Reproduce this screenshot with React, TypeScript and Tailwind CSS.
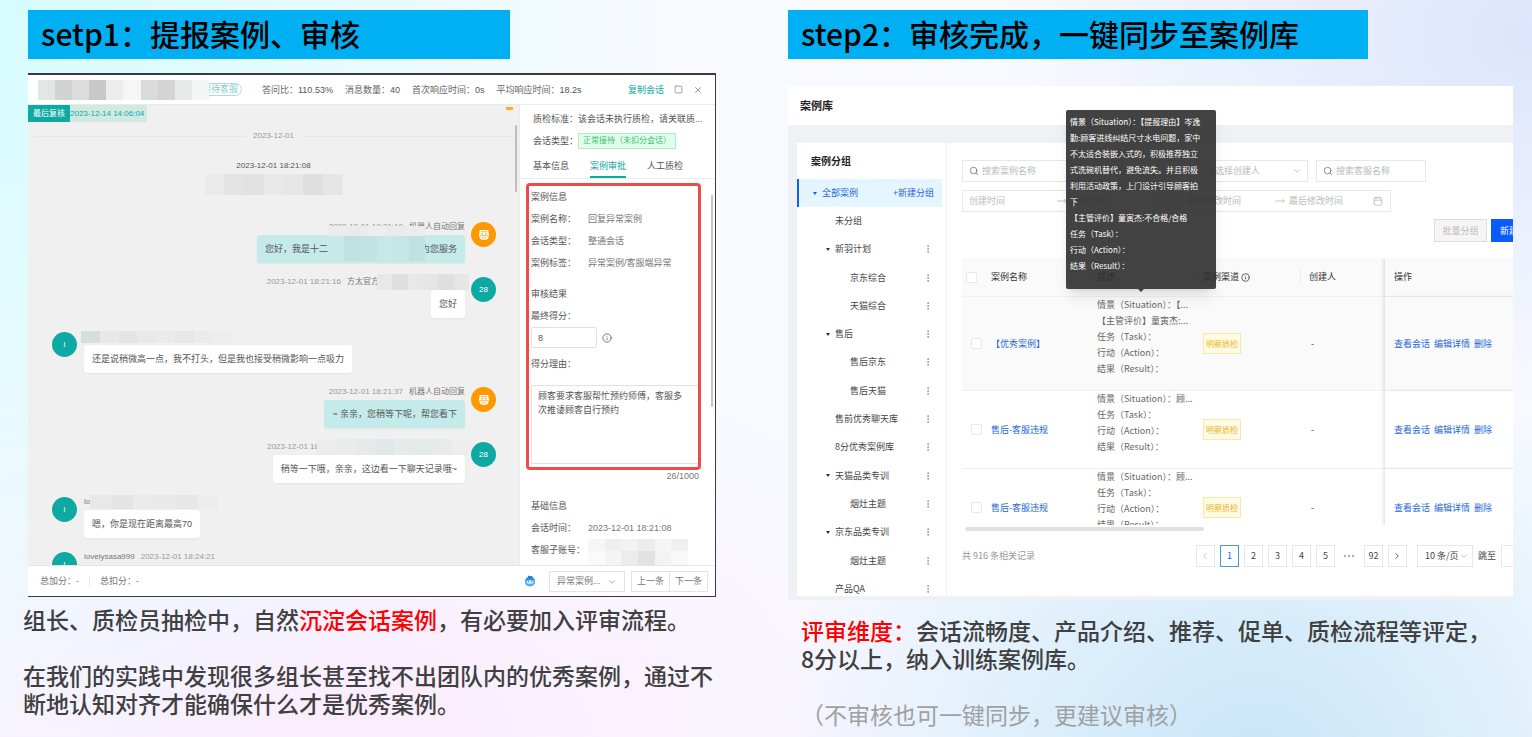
import { Search, ChevronDown, ChevronLeft, ChevronRight, Calendar, Info, Square, X, MoveRight, Ellipsis, EllipsisVertical } from "lucide-react";
import clsx from "clsx";

const tree = [
    { name: "未分组", level: 0, open: false, menu: false },
    { name: "新羽计划", level: 0, open: true, menu: true },
    { name: "京东综合", level: 1, open: false, menu: true },
    { name: "天猫综合", level: 1, open: false, menu: true },
    { name: "售后", level: 0, open: true, menu: true },
    { name: "售后京东", level: 1, open: false, menu: true },
    { name: "售后天猫", level: 1, open: false, menu: true },
    { name: "售前优秀聊天库", level: 0, open: false, menu: true },
    { name: "8分优秀案例库", level: 0, open: false, menu: true },
    { name: "天猫品类专训", level: 0, open: true, menu: true },
    { name: "烟灶主题", level: 1, open: false, menu: true },
    { name: "京东品类专训", level: 0, open: true, menu: true },
    { name: "烟灶主题", level: 1, open: false, menu: true },
    { name: "产品QA", level: 0, open: false, menu: true },
];

const cases = [
    { name: "【优秀案例】", lines: ["情景（Situation）：【...", "【主管评价】童寅杰:...", "任务（Task）：", "行动（Action）：", "结果（Result）："] },
    { name: "售后-客服违规", lines: ["情景（Situation）：顾...", "任务（Task）：", "行动（Action）：", "结果（Result）："] },
    { name: "售后-客服违规", lines: ["情景（Situation）：顾...", "任务（Task）：", "行动（Action）：", "结果（Result）："] },
];

const tip = [
    "情景（Situation）：【提报理由】岑逸",
    "勤:顾客进线纠结尺寸水电问题，家中",
    "不太适合装嵌入式的，积极推荐独立",
    "式洗碗机替代，避免流失。并且积极",
    "利用活动政策，上门设计引导顾客拍",
    "下",
    "【主管评价】童寅杰:不合格/合格",
    "任务（Task）：",
    "行动（Action）：",
    "结果（Result）：",
];

function Mosaic({ cells, className }: { cells: string[]; className: string }) {
    return (
        <div className={clsx("flex", className)} aria-hidden="true">
            {cells.map((c, i) => (
                <span key={i} className={clsx("flex-1", c)} />
            ))}
        </div>
    );
}

function Robot() {
    return (
        <svg viewBox="0 0 24 24" className="size-3">
            <path d="M5 2h14a2 2 0 0 1 2 2v5h1v5h-1v2c0 4-4 6-9 6s-9-2-9-6v-2H2V9h1V4a2 2 0 0 1 2-2z" fill="#fff" />
            <path d="M3 13.500h18M8 18h8M6 5.500h12" stroke="#ff9800" strokeWidth="1.500" />
            <circle cx="8.500" cy="9.500" r="1.700" fill="#ff9800" />
            <circle cx="15.500" cy="9.500" r="1.700" fill="#ff9800" />
        </svg>
    );
}

function Mascot() {
    return (
        <svg viewBox="0 0 24 24" className="size-3">
            <circle cx="12" cy="13" r="10" fill="#2b8fe0" />
            <path d="M8 1l5 2 5-1-3 4H9z" fill="#1c6fc4" />
            <path d="M2.500 10c5 2 14 2 19 0l.5 4c-1 6-5 8-10 8S3 20 2 14z" fill="#4fb2f0" />
            <ellipse cx="12" cy="14" rx="7" ry="3.500" fill="#d4f1ff" />
            <circle cx="9" cy="13.500" r="1" fill="#1a4f92" />
            <circle cx="15" cy="13.500" r="1" fill="#1a4f92" />
        </svg>
    );
}

type MessageProps = {
    side: "left" | "right";
    avatar: React.ReactNode;
    orange?: boolean;
    meta: React.ReactNode;
    bubble?: string;
    children?: React.ReactNode;
};

function Message({ side, avatar, orange, meta, bubble, children }: MessageProps) {
    const right = side === "right";
    return (
        <li className={clsx("flex h-[41px]", right ? "flex-row-reverse gap-1.5" : "gap-[7px]")}>
            <div className={clsx("flex size-[25px] shrink-0 items-center justify-center rounded-full text-[8px] text-white", orange ? "bg-[#ff9800]" : "bg-[#0fa9a3]")}>
                {avatar}
            </div>
            <div className={clsx("relative flex flex-col gap-1", right ? "items-end" : "items-start")}>
                <div className="flex h-[9px] items-center gap-1.5 whitespace-nowrap text-[8px] leading-[9px] text-[#999]">{meta}</div>
                {children && (
                    <div className={clsx("flex h-7 items-center whitespace-nowrap rounded-[3px] px-2 shadow-xs", bubble || "bg-white")}>{children}</div>
                )}
            </div>
        </li>
    );
}

function ChatWindow() {
    return (
        <div className="mt-3.5 border-b border-r border-t-2 border-[#3b3b3f] bg-white font-['Liberation_Sans','Noto_Sans_CJK_SC',sans-serif] text-[9px] leading-3 text-[#555]">
            <header className="flex h-[30px] items-center border-b border-[#eaeaea] pl-2.5 pr-3">
                <Mosaic
                    className="relative z-10 h-5 w-[171px] shrink-0"
                    cells={["bg-[#e2e6e6]", "bg-[#d2d4d4]", "bg-[#dcdcdc]", "bg-[#c8c8c8]", "bg-[#ececec]", "bg-[#f6f6f6]", "bg-[#dadada]", "bg-[#d4d4d4]", "bg-[#e8eaea]", "bg-[#f2f6f6]"]}
                />
                <span className="-ml-[11px] whitespace-nowrap rounded-full border border-[#a9e0dc] px-[3px] leading-[11px] text-[#7fcfcb]">接待客服</span>
                <dl className="ml-5 flex gap-3 whitespace-nowrap">
                    {[["答问比：", "110.53%"], ["消息数量：", "40"], ["首次响应时间：", "0s"], ["平均响应时间：", "18.2s"]].map(([k, v]) => (
                        <div key={k} className="flex">
                            <dt className="text-[#666]">{k}</dt>
                            <dd>{v}</dd>
                        </div>
                    ))}
                </dl>
                <div className="ml-auto flex items-center gap-2.5 whitespace-nowrap">
                    <button className="text-[#0fa9a3]">复制会话</button>
                    <button aria-label="最大化"><Square className="size-[9px] text-[#888]" /></button>
                    <button aria-label="关闭"><X className="size-2.5 text-[#888]" /></button>
                </div>
            </header>

            <div className="flex h-[460px]">
                <section className="relative min-w-0 flex-1 overflow-hidden bg-[#f0f0f0]">
                    <div className="absolute right-1.5 top-0.5 h-[3px] w-[7px] bg-[#f9ae2b]" />
                    <div className="absolute right-0.5 top-5 h-[67px] w-0.5 rounded bg-[#bdbdbd]" />
                    <div className="flex h-[17px] items-center text-[8px] text-[#0fa9a3]">
                        <span className="bg-[#0fa9a3] px-[5px] leading-[17px] text-white">最后复核</span>
                        <span className="bg-[#d0e9e3] pr-[3px] leading-[17px]">2023-12-14 14:06:04</span>
                    </div>
                    <div className="mx-[5px] mt-2 flex items-center gap-2 text-[8px] text-[#999]">
                        <span className="h-px flex-1 bg-[#e6e6e6]" />
                        2023-12-01
                        <span className="h-px flex-1 bg-[#e6e6e6]" />
                    </div>
                    <p className="mt-[18px] text-center text-[8px]">2023-12-01 18:21:08</p>
                    <Mosaic
                        className="mx-auto mt-0.5 h-[21px] w-[138px]"
                        cells={["bg-[#ebebeb]", "bg-[#e4e4e4]", "bg-[#e2e2e2]", "bg-[#e9e9e9]", "bg-[#e7e7e7]", "bg-[#dfdfdf]", "bg-[#e5e5e5]"]}
                    />
                    <ul className="mt-[27px] flex flex-col gap-3.5 pl-6 pr-[23px]">
                        <Message side="right" orange avatar={<Robot />} bubble="bg-[#c4ebe9]" meta={<><span>2023-12-01 18:21:10</span><span className="text-[#777]">机器人自动回复</span></>}>
                            <span className="flex w-48 justify-between"><span>您好，我是十二</span><span>为您服务</span></span>
                            <Mosaic
                                className="absolute right-10 top-1 h-2.5 w-[97px]"
                                cells={["bg-[#ececec]", "bg-[#eaeaea]", "bg-[#eeeeee]", "bg-[#ebebeb]", "bg-[#ececec]"]}
                            />
                            <Mosaic
                                className="absolute right-10 top-3.5 h-[25px] w-[97px]"
                                cells={["bg-[#c8e9e7]", "bg-[#bfe2e0]", "bg-[#c1e4e2]", "bg-[#c6e9e7]", "bg-[#c5e8e6]", "bg-[#bfe2e0]"]}
                            />
                        </Message>
                        <Message
                            side="right"
                            avatar="28"
                            meta={
                                <>
                                    <span>2023-12-01 18:21:16</span>
                                    <span className="flex items-center text-[#777]">
                                        方太官方
                                        <Mosaic className="-ml-0.5 -mr-1 h-4 w-[92px]" cells={["bg-[#e8e8e8]", "bg-[#dde0e0]", "bg-[#e8e8e8]", "bg-[#e5e5e5]", "bg-[#dfdfdf]", "bg-[#e6e6e6]"]} />
                                    </span>
                                </>
                            }
                        >
                            您好
                        </Message>
                        <Message
                            side="left"
                            avatar="l"
                            meta={<Mosaic className="-ml-[3px] h-3 w-[150px]" cells={["bg-[#d3dfdd]", "bg-[#e8e8e8]", "bg-[#e4e4e4]", "bg-[#e9e9e9]", "bg-[#ebebeb]", "bg-[#e7e7e7]", "bg-[#ebebeb]", "bg-[#ededed]"]} />}
                        >
                            还是说稍微高一点，我不打头，但是我也接受稍微影响一点吸力
                        </Message>
                        <Message side="right" orange avatar={<Robot />} bubble="bg-[#c4ebe9]" meta={<><span>2023-12-01 18:21:37</span><span className="text-[#777]">机器人自动回复</span></>}>
                            ~ 亲亲，您稍等下呢，帮您看下
                        </Message>
                        <Message
                            side="right"
                            avatar="28"
                            meta={
                                <span className="flex items-center">
                                    2023-12-01 18
                                    <Mosaic className="-ml-0.5 -mr-1.5 h-4 w-[154px]" cells={["bg-[#ebeceb]", "bg-[#e8eceb]", "bg-[#e6eae9]", "bg-[#e2e8e7]", "bg-[#e6ebea]", "bg-[#e4e9e9]", "bg-[#e8ebeb]", "bg-[#eeeeee]"]} />
                                </span>
                            }
                        >
                            稍等一下哦，亲亲，这边看一下聊天记录哦~
                        </Message>
                        <Message
                            side="left"
                            avatar="l"
                            meta={
                                <span className="flex items-center text-[#777]">
                                    lo
                                    <Mosaic className="h-3.5 w-[128px]" cells={["bg-[#e8e8e8]", "bg-[#e4e4e4]", "bg-[#ebebeb]", "bg-[#e9e9e9]", "bg-[#e7e7e7]", "bg-[#ececec]"]} />
                                </span>
                            }
                        >
                            嗯，你是现在距离最高70
                        </Message>
                        <Message side="left" avatar="l" meta={<><span className="text-[#777]">lovelysasa999</span><span>2023-12-01 18:24:21</span></>} />
                    </ul>
                </section>

                <aside className="relative w-[196px] shrink-0 overflow-hidden border-l border-[#eaeaea] text-[#555]">
                    <div className="absolute right-0.5 top-[90px] h-[212px] w-0.5 rounded bg-[#c4c4c4]" />
                    <div className="px-[13px] pt-[3px]">
                        <p className="-mr-2 h-[22px] truncate leading-[22px]">质检标准：该会话未执行质检，请关联质...</p>
                        <p className="flex h-[22px] items-center">
                            会话类型：
                            <span className="whitespace-nowrap border border-[#b0ecc6] bg-[#e3fdec] px-1 text-[8px] leading-3.5 text-[#35c470]">正常接待（未扣分会话）</span>
                        </p>
                    </div>
                    <div role="tablist" className="flex h-[27px] gap-[21px] border-b border-[#ececec] px-[13px] pt-1">
                        <button role="tab" className="pb-0.5">基本信息</button>
                        <button role="tab" aria-selected="true" className="border-b-2 border-[#0fa9a3] text-[#0fa9a3]">案例审批</button>
                        <button role="tab" className="pb-0.5">人工质检</button>
                    </div>
                    <div className="ml-1.5 mr-3.5 mt-1 rounded border-[3px] border-[#f04b4b] pb-[3px] pl-0.5 leading-[22px]">
                        <h3>案例信息</h3>
                        <dl className="grid grid-cols-[57px_1fr]">
                            <dt>案例名称：</dt>
                            <dd className="text-[#777]">回复异常案例</dd>
                            <dt>会话类型：</dt>
                            <dd className="text-[#777]">整通会话</dd>
                            <dt>案例标签：</dt>
                            <dd className="text-[#777]">异常案例/客服端异常</dd>
                        </dl>
                        <h3 className="mt-[9px]">审核结果</h3>
                        <label htmlFor="score" className="block">最终得分：</label>
                        <div className="flex items-center gap-[5px]">
                            <input id="score" defaultValue="8" className="h-[21px] w-[66px] rounded-xs border border-[#e2e2e2] px-1.5" />
                            <Info className="size-2.5 text-[#666]" />
                        </div>
                        <label htmlFor="reason" className="mt-[5px] block">得分理由：</label>
                        <textarea
                            id="reason"
                            className="mt-2.5 block h-[79px] w-full resize-none border-y border-l border-[#e2e2e2] px-1.5 py-[3px] leading-3.5"
                            defaultValue={"顾客要求客服帮忙预约师傅，客服多\n次推诿顾客自行预约"}
                        />
                    </div>
                    <p className="pr-4 text-right text-[#777]">26/1000</p>
                    <div className="relative mt-[13px] pl-[11px] leading-[22px]">
                        <h3>基础信息</h3>
                        <dl className="grid grid-cols-[57px_1fr]">
                            <dt>会话时间：</dt>
                            <dd className="text-[#777]">2023-12-01 18:21:08</dd>
                            <dt>客服子账号：</dt>
                            <dd>
                                <Mosaic className="h-3 w-[100px]" cells={["bg-[#f6f6f6]", "bg-[#efefef]", "bg-[#f2f2f2]", "bg-[#ececec]", "bg-[#f5f5f5]", "bg-[#f0f0f0]"]} />
                                <Mosaic className="h-4 w-[100px]" cells={["bg-[#fafafa]", "bg-[#f4f4f4]", "bg-[#ececec]", "bg-[#e2e2e2]", "bg-[#f3f3f3]", "bg-[#f8f8f8]"]} />
                            </dd>
                        </dl>
                    </div>
                </aside>
            </div>

            <footer className="flex h-[31px] items-center border-t border-[#e6e6e6] pl-3 pr-[7px] text-[#777]">
                <span>总加分：-</span>
                <span className="ml-2.5 h-2.5 border-l border-[#e6e6e6] pl-2.5 leading-[10px]">总扣分：-</span>
                <div className="ml-auto flex items-center">
                    <Mascot />
                    <div className="relative ml-[13px]">
                        <select aria-label="案例类型" className="block h-[21px] w-[76px] appearance-none border border-[#e4e4e4] px-[7px]">
                            <option>异常案例...</option>
                        </select>
                        <ChevronDown className="pointer-events-none absolute right-2 top-1.5 size-2.5 text-[#999]" />
                    </div>
                    <button className="ml-1.5 h-[21px] border border-[#e4e4e4] px-[5px]">上一条</button>
                    <button className="h-[21px] border border-l-0 border-[#e4e4e4] px-[5px]">下一条</button>
                </div>
            </footer>
        </div>
    );
}

function SearchBox({ text }: { text: string }) {
    return (
        <label className="flex h-[22px] w-[110px] shrink-0 items-center gap-[3px] border border-[#e8e8e8] px-1.5">
            <Search className="size-2.5 shrink-0 text-[#777]" />
            <input aria-label={text} placeholder={text} className="w-full min-w-0 placeholder:text-[#bbb]" />
        </label>
    );
}

function SelectBox({ text }: { text: string }) {
    return (
        <div className="relative shrink-0">
            <select aria-label={text} className="block h-[22px] w-[110px] appearance-none border border-[#e8e8e8] px-[7px] text-[#bbb]">
                <option>{text}</option>
            </select>
            <ChevronDown className="pointer-events-none absolute right-1.5 top-1.5 size-2.5 text-[#bbb]" />
        </div>
    );
}

function DateRange({ text }: { text: string }) {
    return (
        <div className="flex h-[22px] w-[211px] shrink-0 items-center border border-[#e8e8e8] px-1.5">
            <input aria-label={text + "开始"} placeholder={text} className="w-[88px] placeholder:text-[#bbb]" />
            <MoveRight className="size-2.5 text-[#bbb]" />
            <input aria-label={text + "结束"} placeholder={text} className="ml-1 w-[84px] placeholder:text-[#bbb]" />
            <Calendar className="size-2.5 text-[#bbb]" />
        </div>
    );
}

function GroupTree() {
    return (
        <nav className="w-[150px] shrink-0 border-r border-[#f0f0f0]">
            <h3 className="h-9 pl-3.5 text-[10px] font-bold leading-9 text-[#222]">案例分组</h3>
            <div className="mr-1 flex h-7 items-center justify-between border-l-2 border-[#1261f5] bg-[#e5f5ff] pl-3.5 pr-2 text-[#2468d6]">
                <button className="flex items-center gap-[5px]"><span className="border-x-2 border-t-3 border-x-transparent border-t-[#1261f5]" />全部案例</button>
                <button>+新建分组</button>
            </div>
            <ul className="flex h-[396px] flex-col justify-between">
                {tree.map((item, i) => (
                    <li key={i} className="flex h-7 items-center justify-between pr-[13px]">
                        <button className={clsx("flex items-center", item.level ? "pl-[53px]" : item.open ? "pl-[29px]" : "pl-[38px]")}>
                            {item.open && <span className="mr-[5px] border-x-2 border-t-3 border-x-transparent border-t-[#333]" />}
                            {item.name}
                        </button>
                        {item.menu && <button aria-label="更多"><EllipsisVertical className="size-2.5 text-[#888]" /></button>}
                    </li>
                ))}
            </ul>
        </nav>
    );
}

function CaseTable() {
    return (
        <div className="mt-4 h-[267px] overflow-hidden">
            <table className="w-full table-fixed border-separate border-spacing-0 text-left">
                <colgroup>
                    <col className="w-5" />
                    <col className="w-[106px]" />
                    <col className="w-[106px]" />
                    <col className="w-[106px]" />
                    <col className="w-[85px]" />
                    <col />
                </colgroup>
                <thead>
                    <tr className="h-[39px] bg-[#fafafa] text-[#333] *:border-b *:border-[#f0f0f0] *:font-normal">
                        <th className="pl-1"><input type="checkbox" aria-label="全选" className="block size-[11px] appearance-none rounded-xs border border-[#e8e8e8] bg-white" /></th>
                        <th className="pl-[9px]">案例名称</th>
                        <th><div className="border-l border-[#ececec] pl-2 leading-4">描述</div></th>
                        <th><div className="flex items-center gap-0.5 border-l border-[#ececec] pl-2 leading-4">案例渠道<Info className="size-[9px]" /></div></th>
                        <th><div className="border-l border-[#ececec] pl-2 leading-4">创建人</div></th>
                        <th className="bg-[#fafafa] pl-[9px] shadow-[-2px_0_3px_rgba(0,0,0,0.1)]">操作</th>
                    </tr>
                </thead>
                <tbody>
                    {cases.map((row, i) => (
                        <tr key={i} className={clsx("*:border-b *:border-[#f0f0f0]", i === 0 ? "bg-[#fafafa]" : "bg-white")}>
                            <td className="pl-[9px]"><input type="checkbox" aria-label={row.name} className="block size-[11px] appearance-none rounded-xs border border-[#e8e8e8] bg-white" /></td>
                            <td className="pl-[9px]"><a href="#case" className="text-[#2468d6]">{row.name}</a></td>
                            <td className="whitespace-nowrap pb-[13px] pl-[9px] leading-4 text-[#666]">
                                {row.lines.map((line) => (
                                    <div key={line}>{line}</div>
                                ))}
                            </td>
                            <td className="pl-[9px]"><span className="inline-block border border-[#f9e9a8] bg-[#fffbe2] px-0.5 text-[8px] leading-[19px] text-[#e8b428]">明察质检</span></td>
                            <td className="pl-[11px]">-</td>
                            <td className={clsx("pl-[9px] shadow-[-2px_0_3px_rgba(0,0,0,0.1)]", i === 0 ? "bg-[#fafafa]" : "bg-white")}>
                                <div className="flex gap-1 whitespace-nowrap text-[#2468d6]">
                                    <a href="#chat">查看会话</a>
                                    <a href="#edit">编辑详情</a>
                                    <a href="#delete">删除</a>
                                </div>
                            </td>
                        </tr>
                    ))}
                </tbody>
            </table>
        </div>
    );
}

function Pagination() {
    const box = "flex h-[22px] w-[19px] items-center justify-center border border-[#e8e8e8]";
    return (
        <div className="mt-3.5 flex items-center justify-between whitespace-nowrap">
            <span className="text-[#999]">共 916 条相关记录</span>
            <div className="flex items-center gap-[5px]">
                <button aria-label="上一页" className={clsx(box, "text-[#bbb]")}><ChevronLeft className="size-2.5" /></button>
                <button className="h-[22px] w-[19px] border border-[#4a94dc] text-[#1261f5]">1</button>
                {["2", "3", "4", "5"].map((n) => (
                    <button key={n} className={box}>{n}</button>
                ))}
                <span className="flex w-[19px] justify-center text-[#aaa]"><Ellipsis className="size-3.5" /></span>
                <button className={box}>92</button>
                <button aria-label="下一页" className={box}><ChevronRight className="size-2.5" /></button>
                <div className="relative ml-[5px]">
                    <select aria-label="每页条数" className="block h-[22px] w-14 appearance-none border border-[#e8e8e8] px-[7px]">
                        <option>10 条/页</option>
                    </select>
                    <ChevronDown className="pointer-events-none absolute right-1 top-1.5 size-2.5 text-[#bbb]" />
                </div>
                <label htmlFor="jump">跳至</label>
                <input id="jump" className="h-[22px] w-11 border border-[#e8e8e8]" />
            </div>
        </div>
    );
}

function CaseLibrary() {
    return (
        <div className="relative mt-[27px] bg-[#f0f1f5] text-[9px] leading-3 text-[#444]">
            <h2 className="h-[39px] bg-white pl-3 text-[11px] font-bold leading-[39px] text-[#222]">案例库</h2>
            <div className="pb-1 pl-[9px] pt-[18px]">
                <div className="flex h-[453px] overflow-hidden bg-white">
                    <GroupTree />
                    <div className="-mr-8 min-w-0 flex-1 pl-[15px] pt-[17px]">
                        <div className="flex gap-2">
                            <SearchBox text="搜索案例名称" />
                            <SelectBox text="请选择案例渠道" />
                            <SelectBox text="请选择创建人" />
                            <SearchBox text="搜索客服名称" />
                        </div>
                        <div className="mt-2 flex gap-[7px]">
                            <DateRange text="创建时间" />
                            <DateRange text="最后修改时间" />
                        </div>
                        <div className="mt-[7px] flex justify-end gap-1">
                            <button disabled className="h-[23px] w-[53px] border border-[#dedede] bg-[#f5f5f5] text-[#bbb]">批量分组</button>
                            <button className="h-[23px] w-[54px] bg-[#0a5cff] text-white">新建案例</button>
                        </div>
                        <CaseTable />
                        <div className="ml-[3px] mt-0.5 h-1 w-[239px] rounded-full bg-[#e0e0e0]" />
                        <Pagination />
                    </div>
                </div>
            </div>
            <div role="tooltip" className="absolute left-[278px] top-6 h-[179px] w-[150px] whitespace-nowrap rounded-xs bg-[#2d2d2d]/90 px-1 pt-1 text-[8px] leading-4 text-white shadow-lg">
                {tip.map((line) => (
                    <div key={line}>{line}</div>
                ))}
                <span className="absolute left-[72px] top-full border-x-3 border-t-3 border-x-transparent border-t-[#2d2d2d]/90" />
            </div>
        </div>
    );
}

export default function App() {
    return (
        <main
            lang="zh-CN"
            className="grid min-h-screen grid-cols-[688fr_725fr] gap-[72px] overflow-hidden bg-[#f8faff] bg-[radial-gradient(ellipse_45%_110%_at_0%_0%,#d6fcff,transparent),radial-gradient(ellipse_32%_60%_at_82%_105%,#c6e5f8,transparent),radial-gradient(ellipse_45%_55%_at_22%_100%,#fbecfe,transparent),radial-gradient(ellipse_35%_50%_at_100%_5%,#dde5fc,transparent)] pl-7 pr-[19px] pt-2.5 font-['Noto_Sans_CJK_SC',sans-serif]"
        >
            <section className="min-w-0">
                <h1 className="h-[49px] w-[70%] whitespace-nowrap bg-[#00b0f3] pl-[13px] text-[30px] font-medium leading-[46px] text-black">setp1：提报案例、审核</h1>
                <ChatWindow />
                <div className="-ml-[5px] mt-2 whitespace-nowrap text-[23px] font-medium leading-7 text-[#404040]">
                    <p>组长、质检员抽检中，自然<strong className="font-medium text-[#ff0000]">沉淀会话案例</strong>，有必要加入评审流程。</p>
                    <p className="mt-7">在我们的实践中发现很多组长甚至找不出团队内的优秀案例，通过不<br />断地认知对齐才能确保什么才是优秀案例。</p>
                </div>
            </section>

            <section className="min-w-0">
                <h1 className="h-[49px] w-[80%] whitespace-nowrap bg-[#00b0f3] pl-[13px] text-[30px] font-medium leading-[46px] text-black">step2：审核完成，一键同步至案例库</h1>
                <CaseLibrary />
                <div className="mt-4 whitespace-nowrap pl-[13px] text-[23px] font-medium leading-7 text-[#404040]">
                    <p><strong className="font-medium text-[#ff0000]">评审维度：</strong>会话流畅度、产品介绍、推荐、促单、质检流程等评定，<br />8分以上，纳入训练案例库。</p>
                    <p className="mt-7 font-normal text-[#a0a0a0]">（不审核也可一键同步，更建议审核）</p>
                </div>
            </section>
        </main>
    );
}
